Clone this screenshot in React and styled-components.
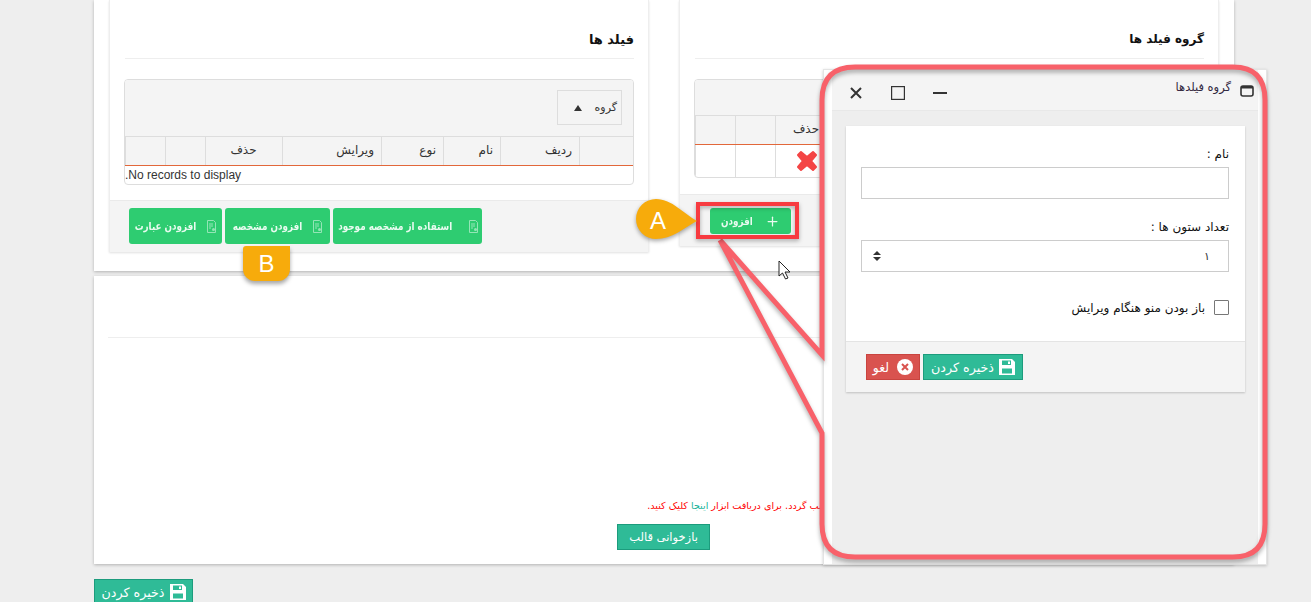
import React from 'react';
import styled, { createGlobalStyle } from 'styled-components';
import { Plus } from 'lucide-react';

const Global = createGlobalStyle`
  html, body { margin: 0; padding: 0; background: #fff; overflow: hidden; }
  body { font-family: "DejaVu Sans", "Liberation Sans", sans-serif; color: #222; }
  * { box-sizing: border-box; }
`;

const Page = styled.div`
  position: relative;
  width: 1311px;
  height: 602px;
  padding: 0 77px 0 94px;
  background: #eeeeee;
  overflow: hidden;
  direction: rtl;
`;

const Card = styled.div`
  background: #fff;
  box-shadow: 0 1px 3px rgba(0, 0, 0, 0.25);
`;

const TopCard = styled(Card)`
  display: grid;
  grid-template-columns: 540px 540px;
  gap: 30px;
  align-items: start;
  height: 271px;
  padding: 0 15px;
`;

const Panel = styled.div`
  background: #fff;
  border: solid #eee;
  border-width: 0 1px;
  box-shadow: 0 1px 2px rgba(0, 0, 0, 0.12);
`;

const PanelBody = styled.div`
  padding: 0 14px ${(p) => p.$bottom}px 15px;
`;

const Heading = styled.h4`
  margin: 0 0 20px;
  height: 59px;
  padding-top: 31px;
  border-bottom: 1px solid #eee;
  font-size: ${(p) => p.$size}px;
  line-height: 17px;
  font-weight: 700;
  color: #111;
`;

const TableBox = styled.div`
  width: 510px;
  border: 1px solid #ddd;
  border-radius: 4px;
  background: #fff;
  overflow: hidden;
`;

const GroupBar = styled.div`
  height: ${(p) => p.$height}px;
  padding: 10px 11px 0 0;
  background: #f4f4f4;
`;

const GroupChip = styled.div`
  display: flex;
  align-items: center;
  gap: 13px;
  width: 65px;
  height: 35px;
  padding-right: 4px;
  border: 1px solid #ddd;
  font-size: 11px;
  color: #333;
`;

const Caret = styled.span`
  width: 0;
  height: 0;
  border: 4px solid transparent;
  border-top: 0;
  border-bottom: 6px solid #333;
`;

const HeaderRow = styled.div`
  display: grid;
  grid-template-columns: ${(p) => p.$cols};
  height: 30px;
  background: #f4f4f4;
  border-top: 1px solid #ddd;
  border-bottom: 1px solid #e2673a;
`;

const HeaderCell = styled.div`
  border-left: 1px solid #ddd;
  padding-right: ${(p) => p.$pad || 7}px;
  font-size: 12px;
  line-height: 26px;
  color: #333;
  text-align: ${(p) => (p.$center ? 'center' : 'right')};
`;

const DataRow = styled.div`
  display: grid;
  grid-template-columns: ${(p) => p.$cols};
  height: 32px;
`;

const DataCell = styled.div`
  display: flex;
  align-items: center;
  justify-content: center;
  border-left: 1px solid #ddd;
`;

const EmptyRow = styled.div`
  height: 18px;
  font-family: "Liberation Sans", sans-serif;
  font-size: 12px;
  line-height: 18px;
  color: #333;
  text-align: left;
`;

const Footer = styled.div`
  display: flex;
  gap: 3px;
  height: 52px;
  padding: ${(p) => p.$top}px 0 0 ${(p) => p.$left}px;
  justify-content: flex-end;
  background: #f4f4f4;
  border-top: 1px solid #eaeaea;
`;

const GreenButton = styled.button`
  display: flex;
  align-items: center;
  justify-content: center;
  gap: ${(p) => p.$gap}px;
  width: ${(p) => p.$width}px;
  height: ${(p) => p.$height}px;
  padding: 0;
  border: 0;
  border-radius: 3px;
  background: #2ecc71;
  color: #e9fbf0;
  font: 700 11px "DejaVu Sans", sans-serif;
  direction: rtl;
`;

// the original webfont is much narrower than DejaVu, so the caption is squeezed
const Caption = styled.span`
  display: inline-block;
  white-space: nowrap;
  transform: scaleX(0.8);
  margin: 0 ${(p) => -p.$w * 0.125}px;
`;

const SecondCard = styled(Card)`
  position: relative;
  height: 288px;
  margin-top: 5px;
  padding-top: 61px;
`;

const Rule = styled.div`
  margin: 0 14px;
  border-top: 1px solid #eee;
`;

const Notice = styled.p`
  margin: 160px 404px 0 0;
  height: 16px;
  font-size: 9.6px;
  line-height: 16px;
  color: #f00;
  white-space: nowrap;
`;

const Link = styled.span`
  color: #18b39a;
`;

const TealButton = styled.button`
  display: flex;
  align-items: center;
  justify-content: center;
  gap: 5px;
  width: ${(p) => p.$width}px;
  height: 26px;
  margin: ${(p) => p.$margin || 0};
  padding: 0;
  border: 1px solid #1c9c7d;
  background: #2fbb97;
  color: #fff;
  font: ${(p) => p.$size || 12.7}px "DejaVu Sans", sans-serif;
  direction: rtl;
`;

const Window = styled.div`
  position: absolute;
  left: 823px;
  top: 69px;
  width: 444px;
  height: 496px;
  padding: 0 8px;
  background: #fff;
  border: 1px solid #e4e4e4;
  box-shadow: 0 1px 3px rgba(0, 0, 0, 0.2);
`;

const WindowInner = styled.div`
  height: 100%;
  background: #eeeeee;
  padding: 0 13px 0 14px;
`;

const WindowBar = styled.div`
  display: flex;
  align-items: flex-start;
  height: 41px;
  margin: 0 -13px 15px -14px;
  padding: 10px 4px 0 0;
  background: #f4f4f4;
  border-bottom: 1px solid #e8e8e8;
`;

const WindowTitle = styled.span`
  margin-right: 9px;
  font-size: 11.5px;
  line-height: 14px;
  color: #33283f;
`;

const WindowControls = styled.div`
  display: flex;
  align-items: center;
  gap: 26px;
  margin: 5px auto 0 16px;
`;

const Form = styled.div`
  height: 266px;
  background: #fff;
  box-shadow: 0 1px 2px rgba(0, 0, 0, 0.2);
`;

const FormBody = styled.div`
  height: 215px;
  padding: 20px 16px 0 16px;
`;

const Label = styled.div`
  height: 21px;
  font-size: 12px;
  line-height: 16px;
  color: #111;
`;

const TextField = styled.div`
  display: flex;
  align-items: center;
  justify-content: space-between;
  width: 368px;
  height: 32px;
  margin-bottom: 20px;
  padding: 0 18px 0 11px;
  border: 1px solid #ccc;
  font-size: 11px;
  color: #333;
`;

const Spinner = styled.span`
  display: flex;
  flex-direction: column;
  gap: 2px;
`;

const SpinArrow = styled.i`
  width: 0;
  height: 0;
  border: 4px solid transparent;
  border-width: ${(p) => (p.$down ? '4px 4px 0' : '0 4px 4px')};
  border-top-color: ${(p) => (p.$down ? '#333' : 'transparent')};
  border-bottom-color: ${(p) => (p.$down ? 'transparent' : '#333')};
`;

const CheckRow = styled.div`
  display: flex;
  align-items: center;
  gap: 9px;
  margin-top: 28px;
  font-size: 12px;
  color: #111;
`;

const Check = styled.span`
  width: 15px;
  height: 15px;
  border: 1px solid #777;
  border-radius: 1px;
`;

const FormFooter = styled.div`
  display: flex;
  justify-content: flex-end;
  height: 51px;
  padding-top: 12px;
  background: #f4f4f4;
  border-top: 1px solid #e4e4e4;
`;

const FormActions = styled.div`
  display: flex;
  gap: 3px;
  margin-left: 20px;
`;

const CancelButton = styled.button`
  display: flex;
  align-items: center;
  justify-content: center;
  gap: 8px;
  width: 54px;
  height: 26px;
  padding: 0;
  border: 1px solid #c9443f;
  background: #d9534f;
  color: #fff;
  font: 12.5px "DejaVu Sans", sans-serif;
  direction: rtl;
`;

const Marks = styled.svg`
  position: absolute;
  left: 0;
  top: 0;
  pointer-events: none;
`;

const BadgeB = styled.div`
  position: absolute;
  left: 243px;
  top: 246px;
  width: 47px;
  height: 35px;
  border-radius: 3px 0 12px 12px;
  background: #f7ab0b;
  box-shadow: 0 3px 4px rgba(0, 0, 0, 0.35);
  color: #fff;
  font: 24px/35px "Liberation Sans", sans-serif;
  text-align: center;
`;

const BadgeA = styled.div`
  position: absolute;
  left: 636px;
  top: 205px;
  width: 44px;
  color: #fff;
  font: 24px/32px "Liberation Sans", sans-serif;
  text-align: center;
`;

const SheetIcon = () => (
  <svg width="11" height="13" viewBox="0 0 11 13" fill="none" stroke="#e9fbf0" strokeWidth="1" opacity="0.55">
    <path d="M1.500 .5h6l2 2v10h-8z" />
    <path d="M3 4h4M3 6h4M3 8h2" />
    <circle cx="7.500" cy="9.500" r="1.500" fill="#e9fbf0" stroke="none" />
  </svg>
);

const Floppy = ({ size }) => (
  <svg width={size} height={size} viewBox="0 0 16 16">
    <path fill="#fff" d="M0 0h13l3 3v13H0z" />
    <path fill="#2fbb97" d="M3 1.500h9v4.500H3zM3 9.500h10v5H3z" />
    <path fill="#fff" d="M9 2.500h2v2.500H9z" />
  </svg>
);

const CrossMark = () => (
  <svg width="22" height="22" viewBox="0 0 22 22">
    <path fill="#f44545" stroke="#f44545" strokeWidth="2" strokeLinejoin="round" d="M5 2l6 5 6-5 3 3-5 6 5 6-3 3-6-5-6 5-3-3 5-6-5-6z" />
  </svg>
);

const leftCols = '54px 79px 57px 62px 99px 77px 40px 1fr';
const rightCols = '40px 40px 62px 115px 62px 57px 79px 1fr';

const App = () => (
  <>
    <Global />
    <Page>
      <TopCard>
        <Panel>
          <PanelBody $bottom={16}>
            <Heading $size={12}>گروه فیلد ها</Heading>
            <TableBox>
              <GroupBar $height={35} />
              <HeaderRow $cols={rightCols} dir="ltr">
                <HeaderCell />
                <HeaderCell />
                <HeaderCell $center $pad={1} dir="rtl">حذف</HeaderCell>
                <HeaderCell />
                <HeaderCell />
                <HeaderCell />
                <HeaderCell />
                <HeaderCell />
              </HeaderRow>
              <DataRow $cols={rightCols} dir="ltr">
                <DataCell />
                <DataCell />
                <DataCell><CrossMark /></DataCell>
              </DataRow>
            </TableBox>
          </PanelBody>
          <Footer $top={13} $left={30}>
            <GreenButton $width={81} $height={26} $gap={13}>
              <Plus size={15} strokeWidth={2} />
              <Caption $w={34}>افزودن</Caption>
            </GreenButton>
          </Footer>
        </Panel>
        <Panel>
          <PanelBody $bottom={15}>
            <Heading $size={13}>فیلد ها</Heading>
            <TableBox>
              <GroupBar $height={56}>
                <GroupChip>
                  گروه
                  <Caret />
                </GroupChip>
              </GroupBar>
              <HeaderRow $cols={leftCols}>
                <HeaderCell />
                <HeaderCell>ردیف</HeaderCell>
                <HeaderCell>نام</HeaderCell>
                <HeaderCell>نوع</HeaderCell>
                <HeaderCell>ویرایش</HeaderCell>
                <HeaderCell $center $pad={1}>حذف</HeaderCell>
                <HeaderCell />
                <HeaderCell />
              </HeaderRow>
              <EmptyRow>
                <span dir="rtl">No records to display.</span>
              </EmptyRow>
            </TableBox>
          </PanelBody>
          <Footer $top={7} $left={19}>
            <GreenButton $width={149} $height={36} $gap={14}>
              <SheetIcon />
              <Caption $w={97}>استفاده از مشخصه موجود</Caption>
            </GreenButton>
            <GreenButton $width={105} $height={36} $gap={9}>
              <SheetIcon />
              <Caption $w={67}>افزودن مشخصه</Caption>
            </GreenButton>
            <GreenButton $width={93} $height={36} $gap={8}>
              <SheetIcon />
              <Caption $w={56}>افزودن عبارت</Caption>
            </GreenButton>
          </Footer>
        </Panel>
      </TopCard>

      <SecondCard>
        <Rule />
        <Notice>
          نصب گردد. برای دریافت ابزار <Link>اینجا</Link> کلیک کنید.
        </Notice>
        <TealButton $width={93} $size={11.5} $margin="10px 524px 0 0">بازخوانی قالب</TealButton>
      </SecondCard>

      <TealButton $width={99} $margin="15px 1041px 0 0">
        <Floppy size={16} />
        ذخیره کردن
      </TealButton>

      <Window>
        <WindowInner>
          <WindowBar>
            <svg width="14" height="12" viewBox="0 0 14 12" style={{ marginTop: 5 }}>
              <rect x="1" y="1" width="12" height="10" rx="2" fill="#f4f4f4" stroke="#333" strokeWidth="1.6" />
              <path d="M1 1h12v2.500H1z" fill="#333" />
            </svg>
            <WindowTitle>گروه فیلدها</WindowTitle>
            <WindowControls dir="ltr">
              <svg width="16" height="16" viewBox="0 0 16 16" stroke="#333" strokeWidth="2">
                <path d="M3 3l10 10M13 3L3 13" />
              </svg>
              <svg width="16" height="16" viewBox="0 0 16 16" fill="none" stroke="#333" strokeWidth="1.2">
                <rect x="1.600" y="1.600" width="12.800" height="12.800" />
              </svg>
              <svg width="16" height="16" viewBox="0 0 16 16" stroke="#333" strokeWidth="2">
                <path d="M1 8h14" />
              </svg>
            </WindowControls>
          </WindowBar>
          <Form>
            <FormBody>
              <Label>نام :</Label>
              <TextField />
              <Label>تعداد ستون ها :</Label>
              <TextField>
                ۱
                <Spinner>
                  <SpinArrow />
                  <SpinArrow $down />
                </Spinner>
              </TextField>
              <CheckRow>
                <Check />
                باز بودن منو هنگام ویرایش
              </CheckRow>
            </FormBody>
            <FormFooter>
              <FormActions>
                <TealButton $width={100}>
                  <Floppy size={16} />
                  ذخیره کردن
                </TealButton>
                <CancelButton>
                  <svg width="16" height="16" viewBox="0 0 16 16">
                    <circle cx="8" cy="8" r="8" fill="#fff" />
                    <path d="M5 5l6 6M11 5l-6 6" stroke="#d9534f" strokeWidth="2" />
                  </svg>
                  لغو
                </CancelButton>
              </FormActions>
            </FormFooter>
          </Form>
        </WindowInner>
      </Window>

      <BadgeB>B</BadgeB>

      <Marks width="1311" height="602" viewBox="0 0 1311 602">
        <path
          d="M720 240L822 355V100Q822 67 855 67H1233Q1265 67 1265 100V524Q1265 557 1233 557H855Q822 557 822 524V433L720 240"
          fill="none"
          stroke="#f8616a"
          strokeWidth="5"
          style={{ filter: 'drop-shadow(0 3px 2px rgba(0,0,0,.3))' }}
        />
        <rect x="698" y="204" width="99" height="33" fill="none" stroke="#f73b40" strokeWidth="4" style={{ filter: 'drop-shadow(0 2px 2px rgba(0,0,0,.3))' }} />
        <path d="M656 199C672 199 684 214 697 221C684 228 672 239 656 239A20 20 0 0 1 656 199z" fill="#f7ab0b" style={{ filter: 'drop-shadow(0 2px 2px rgba(0,0,0,.35))' }} />
        <path d="M779 261V276L782.500 273L785.500 279L788 278L785 272H790z" fill="#fff" stroke="#222" strokeWidth="1" />
      </Marks>
      <BadgeA>A</BadgeA>
    </Page>
  </>
);

export default App;
